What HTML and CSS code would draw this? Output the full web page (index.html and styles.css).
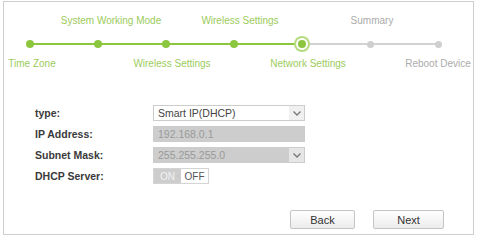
FILE: index.html
```html
<!DOCTYPE html>
<html lang="en">
<head>
    <meta charset="UTF-8">
    <meta name="viewport" content="width=device-width, initial-scale=1.0">
    <title>Quick Setup - Network Settings</title>
    <link rel="stylesheet" href="styles.css">
</head>
<body>

    <div class="wizard-frame">

        <div class="stepper">
            <div class="step done first">
                <span class="step-label"></span>
                <span class="step-track"><span class="dot"></span></span>
                <span class="step-label nudge-s">Time Zone</span>
            </div>
            <div class="step done">
                <span class="step-label nudge-l">System Working Mode</span>
                <span class="step-track"><span class="dot"></span></span>
                <span class="step-label"></span>
            </div>
            <div class="step done">
                <span class="step-label"></span>
                <span class="step-track"><span class="dot"></span></span>
                <span class="step-label nudge-m">Wireless Settings</span>
            </div>
            <div class="step done">
                <span class="step-label nudge-m">Wireless Settings</span>
                <span class="step-track"><span class="dot"></span></span>
                <span class="step-label"></span>
            </div>
            <div class="step current">
                <span class="step-label"></span>
                <span class="step-track"><span class="dot"></span></span>
                <span class="step-label nudge-m">Network Settings</span>
            </div>
            <div class="step todo">
                <span class="step-label nudge-s">Summary</span>
                <span class="step-track"><span class="dot"></span></span>
                <span class="step-label"></span>
            </div>
            <div class="step todo last">
                <span class="step-label"></span>
                <span class="step-track"><span class="dot"></span></span>
                <span class="step-label">Reboot Device</span>
            </div>
        </div>

        <div class="settings-form">
            <label class="field-label" for="connType">type:</label>
            <div class="select-box">
                <span class="select-value" id="connType">Smart IP(DHCP)</span>
                <span class="select-arrow">
                    <svg width="8" height="5" viewBox="0 0 8 5"><path d="M0.5 0.5 L4 4 L7.5 0.5" fill="none" stroke="#777" stroke-width="1.3"/></svg>
                </span>
            </div>

            <label class="field-label">IP Address:</label>
            <div class="text-box disabled">192.168.0.1</div>

            <label class="field-label">Subnet Mask:</label>
            <div class="select-box disabled">
                <span class="select-value">255.255.255.0</span>
                <span class="select-arrow">
                    <svg width="8" height="5" viewBox="0 0 8 5"><path d="M0.5 0.5 L4 4 L7.5 0.5" fill="none" stroke="#777" stroke-width="1.3"/></svg>
                </span>
            </div>

            <label class="field-label">DHCP Server:</label>
            <div class="toggle">
                <span class="toggle-on">ON</span>
                <span class="toggle-off">OFF</span>
            </div>
        </div>

        <div class="actions">
            <button class="btn btn-back">Back</button>
            <button class="btn btn-next">Next</button>
        </div>

    </div>

</body>
</html>
```

FILE: styles.css
```css
body {
    margin: 0;
    padding: 1px 6px 4px 3px;
    background-color: #fff;
    font-family: 'Liberation Sans', Arial, sans-serif;
}

.wizard-frame {
    width: 471px;
    height: 234px;
    border: 1px solid #cfcfcf;
    box-sizing: border-box;
    overflow: hidden;
    padding-top: 12px;
}

/* ---- progress steps ---- */
.stepper {
    display: grid;
    grid-template-columns: repeat(7, 68px);
    margin-left: -8px;
}

.step {
    display: flex;
    flex-direction: column;
    align-items: center;
}

.step-label {
    height: 14px;
    line-height: 14px;
    font-size: 10px;
    white-space: nowrap;
    color: #9ccb5c;
}

/* labels don't sit exactly centred over their dot */
.step-label.nudge-s { padding-left: 4px; }
.step-label.nudge-m { padding-left: 12px; }
.step-label.nudge-l { padding-left: 26px; }

.step.todo .step-label {
    color: #ababab;
}

.step-track {
    align-self: stretch;
    height: 14px;
    margin: 9px 0 6px;
    display: flex;
    justify-content: center;
    align-items: center;
    /* left half = incoming line, right half = outgoing line */
    background: linear-gradient(to right, #8cc63f 50%, #8cc63f 50%) no-repeat center / 100% 2px;
}

.step.first .step-track {
    background: linear-gradient(to right, transparent 50%, #8cc63f 50%) no-repeat center / 100% 2px;
}

.step.current .step-track {
    background: linear-gradient(to right, #8cc63f 50%, #d2d2d2 50%) no-repeat center / 100% 2px;
}

.step.todo .step-track {
    background: linear-gradient(to right, #d2d2d2 50%, #d2d2d2 50%) no-repeat center / 100% 2px;
}

.step.last .step-track {
    background: linear-gradient(to right, #d2d2d2 50%, transparent 50%) no-repeat center / 100% 2px;
}

.dot {
    width: 8px;
    height: 8px;
    border-radius: 50%;
    background-color: #8cc63f;
}

.step.todo .dot {
    width: 7px;
    height: 7px;
    background-color: #cfcfcf;
}

.step.current .dot {
    width: 8px;
    height: 8px;
    border: 2px solid #fff;
    box-shadow: 0 0 0 2px #b5dc80;
}

/* ---- form ---- */
.settings-form {
    display: grid;
    grid-template-columns: 118px 152px;
    grid-auto-rows: 16px;
    row-gap: 5px;
    align-items: center;
    margin: 34px 0 0 31px;
}

.field-label {
    font-size: 10.5px;
    font-weight: bold;
    color: #3a3a3a;
}

.select-box,
.text-box {
    height: 16px;
    border: 1px solid #cccccc;
    box-sizing: border-box;
    font-size: 10.5px;
    color: #444;
    display: flex;
    align-items: center;
}

.select-value {
    flex: 1;
    padding-left: 4px;
}

.select-arrow {
    width: 15px;
    height: 14px;
    background-color: #f0f0f0;
    display: flex;
    justify-content: center;
    align-items: center;
}

.text-box {
    padding-left: 4px;
}

.disabled {
    background-color: #cdcdcd;
    color: #9a9a9a;
}

.disabled .select-arrow {
    background-color: #e6e6e6;
}

.toggle {
    display: flex;
    width: 56px;
    height: 16px;
    border: 1px solid #d4d4d4;
    box-sizing: border-box;
    font-size: 10px;
}

.toggle span {
    flex: 1;
    display: flex;
    justify-content: center;
    align-items: center;
}

.toggle-on {
    background-color: #cdcdcd;
    color: #f2f2f2;
}

.toggle-off {
    background-color: #fff;
    color: #555;
}

/* ---- buttons ---- */
.actions {
    display: flex;
    justify-content: flex-end;
    gap: 18px;
    margin: 26px 29px 0 0;
}

.btn {
    height: 19px;
    border: 1px solid #c4c4c4;
    border-radius: 2px;
    background: linear-gradient(#ffffff, #ececec);
    font-family: inherit;
    font-size: 11px;
    color: #333;
    padding: 0;
    cursor: pointer;
}

.btn-back {
    width: 65px;
}

.btn-next {
    width: 71px;
}
```
